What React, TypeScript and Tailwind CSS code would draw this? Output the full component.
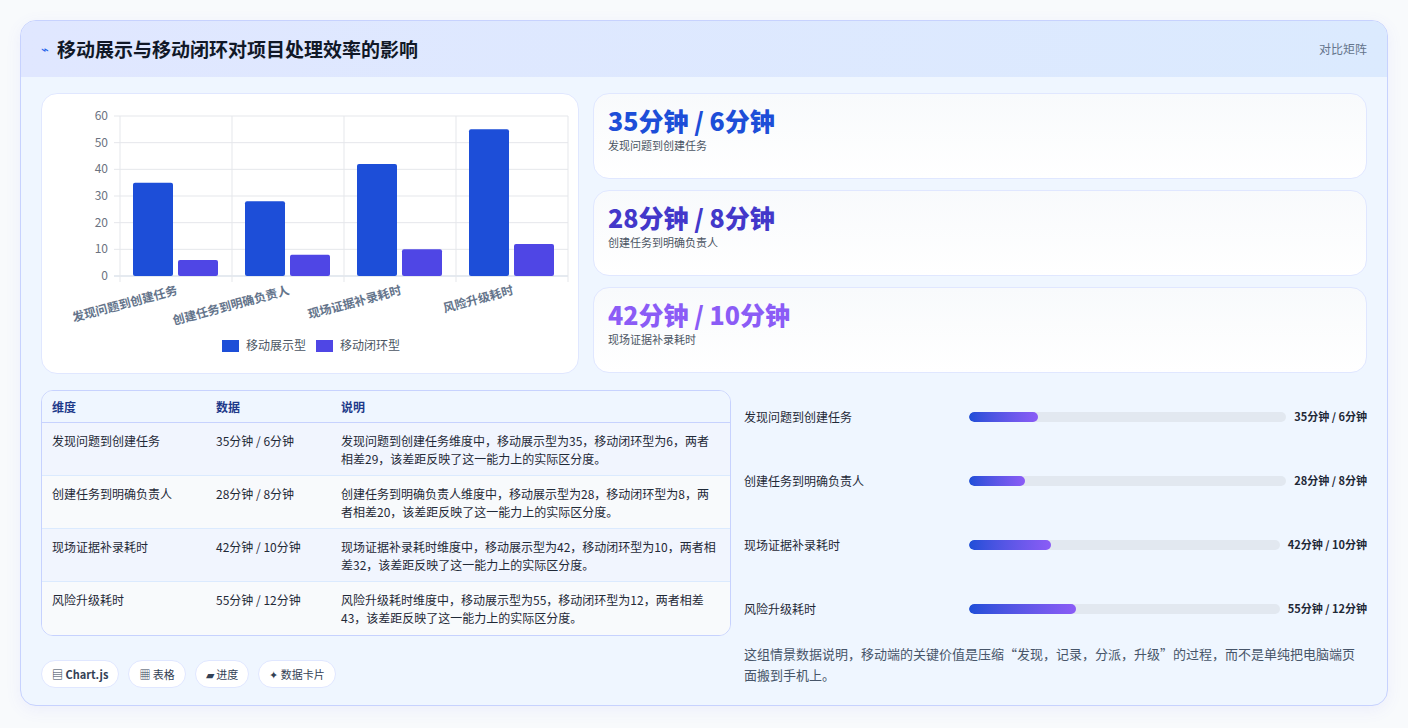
import React from "react";

const cats = ["发现问题到创建任务", "创建任务到明确负责人", "现场证据补录耗时", "风险升级耗时"];
const a = [35, 28, 42, 55];
const b = [6, 8, 10, 12];
const vals = ["35分钟 / 6分钟", "28分钟 / 8分钟", "42分钟 / 10分钟", "55分钟 / 12分钟"];
const descs = [
  "发现问题到创建任务维度中，移动展示型为35，移动闭环型为6，两者相差29，该差距反映了这一能力上的实际区分度。",
  "创建任务到明确负责人维度中，移动展示型为28，移动闭环型为8，两者相差20，该差距反映了这一能力上的实际区分度。",
  "现场证据补录耗时维度中，移动展示型为42，移动闭环型为10，两者相差32，该差距反映了这一能力上的实际区分度。",
  "风险升级耗时维度中，移动展示型为55，移动闭环型为12，两者相差43，该差距反映了这一能力上的实际区分度。",
];

function Chart() {
  const x0 = 78, x1 = 526, y0 = 22, y1 = 182;
  const cw = (x1 - x0) / 4;
  const yy = (v: number) => y1 - (v / 60) * (y1 - y0);
  return (
    <svg width="538" height="280" className="block">
      {[0, 10, 20, 30, 40, 50, 60].map((v) => (
        <g key={v}>
          <line x1={x0 - 6} x2={x1} y1={yy(v)} y2={yy(v)} stroke={v === 0 ? "#cbd5e1" : "#e5e7eb"} />
          <text x={x0 - 12} y={yy(v) + 4} textAnchor="end" fontSize="12" fill="#6b7280">{v}</text>
        </g>
      ))}
      {[0, 1, 2, 3, 4].map((i) => (
        <line key={i} x1={x0 + i * cw} x2={x0 + i * cw} y1={y0} y2={y1 + 6} stroke="#e5e7eb" />
      ))}
      {cats.map((c, i) => {
        const cx = x0 + i * cw;
        return (
          <g key={c}>
            <rect x={cx + 13} y={yy(a[i])} width="40" height={y1 - yy(a[i])} rx="2" fill="#1d4ed8" />
            <rect x={cx + 58} y={yy(b[i])} width="40" height={y1 - yy(b[i])} rx="2" fill="#4f46e5" />
            <text transform={`translate(${cx + cw / 2 + 2},${y1 + 18}) rotate(-15)`} textAnchor="end" fontSize="12" fontWeight="600" fill="#64748b">{c}</text>
          </g>
        );
      })}
      <rect x="180" y="246" width="17" height="12" fill="#1d4ed8" />
      <text x="204" y="256" fontSize="12" fill="#4b5563">移动展示型</text>
      <rect x="274" y="246" width="17" height="12" fill="#4f46e5" />
      <text x="298" y="256" fontSize="12" fill="#4b5563">移动闭环型</text>
    </svg>
  );
}

export default function App() {
  const font = { fontFamily: '"Noto Sans CJK SC", "Noto Sans", sans-serif' };
  const cardColors = ["text-[#1d4ed8]", "text-[#4338ca]", "text-[#8b5cf6]"];
  const pct = [21.9, 17.5, 26.25, 34.4];
  return (
    <div className="w-[1408px] h-[728px] bg-[#f8fafc] p-5" style={font}>
      <div className="h-[686px] rounded-2xl border border-[#c7d2fe] bg-[#eff6ff] overflow-hidden shadow-[0_4px_16px_rgba(99,102,241,0.08)] flex flex-col">
        <div className="h-[56px] shrink-0 bg-gradient-to-r from-[#e0e7ff] to-[#dbeafe] flex items-center justify-between px-5">
          <div className="flex items-center gap-2">
            <span className="text-[#2563eb] text-[13px]">⌁</span>
            <span className="text-[19px] font-bold text-[#111827]">移动展示与移动闭环对项目处理效率的影响</span>
          </div>
          <span className="text-[12px] text-[#64748b]">对比矩阵</span>
        </div>
        <div className="flex-1 px-5 pt-[16px] flex flex-col">
          <div className="grid grid-cols-[538px_1fr] gap-[14px]">
            <div className="bg-white rounded-2xl border border-[#e0e7ff] h-[281px]">
              <Chart />
            </div>
            <div className="flex flex-col gap-[11px]">
              {[0, 1, 2].map((i) => (
                <div key={i} className="h-[86px] rounded-2xl border border-[#e0e7ff] bg-gradient-to-b from-[#f8fafc] to-white px-[14px] pt-[10px]">
                  <div className={`text-[25px] font-extrabold leading-[32px] ${cardColors[i]}`}>{vals[i]}</div>
                  <div className="text-[11px] text-[#4b5563] mt-[1px]">{cats[i]}</div>
                </div>
              ))}
            </div>
          </div>
          <div className="grid grid-cols-[690px_1fr] gap-[13px] mt-[16px]">
            <div className="flex flex-col">
              <div className="rounded-xl border border-[#c7d2fe] bg-[#f8fafc] overflow-hidden">
                <div className="grid grid-cols-[164px_125px_1fr] h-[32px] items-center px-[10px] bg-[#eff6ff] border-b border-[#c7d2fe] text-[12px] font-bold text-[#1e3a8a]">
                  <div>维度</div><div>数据</div><div>说明</div>
                </div>
                {cats.map((c, i) => (
                  <div key={c} className={`grid grid-cols-[164px_125px_1fr] h-[53px] pt-[9px] px-[10px] text-[12px] text-[#1f2937] leading-[18px] ${i < 3 ? "border-b border-[#dbeafe]" : ""} ${i % 2 === 0 ? "bg-[#f1f5fe]" : "bg-[#f8fafc]"}`}>
                    <div>{c}</div><div>{vals[i]}</div><div>{descs[i]}</div>
                  </div>
                ))}
              </div>
              <div className="flex gap-[9px] mt-[24px]">
                {["▤ Chart.js", "▦ 表格", "▰ 进度", "✦ 数据卡片"].map((t, i) => (
                  <div key={t} className={`h-[28px] rounded-full bg-white border border-[#e0e7ff] px-[10px] flex items-center text-[11px] text-[#334155] ${i === 0 ? "font-bold" : ""}`}>{t}</div>
                ))}
              </div>
            </div>
            <div className="flex flex-col pr-[0px]">
              {cats.map((c, i) => (
                <div key={c} className="h-[64px] flex items-start pt-[18px]">
                  <div className="w-[225px] text-[12px] text-[#1f2937]">{c}</div>
                  <div className="flex-1 h-[10px] mt-[4px] rounded-full bg-[#e2e8f0] overflow-hidden">
                    <div className="h-full rounded-full bg-gradient-to-r from-[#1d4ed8] to-[#8b5cf6]" style={{ width: `${pct[i]}%` }} />
                  </div>
                  <div className="ml-[8px] text-[11px] font-bold text-[#1f2937] text-right">{vals[i]}</div>
                </div>
              ))}
              <div className="text-[13px] text-[#475569] leading-[21px] mt-[-3px]">这组情景数据说明，移动端的关键价值是压缩“发现，记录，分派，升级”的过程，而不是单纯把电脑端页面搬到手机上。</div>
            </div>
          </div>
        </div>
      </div>
    </div>
  );
}
